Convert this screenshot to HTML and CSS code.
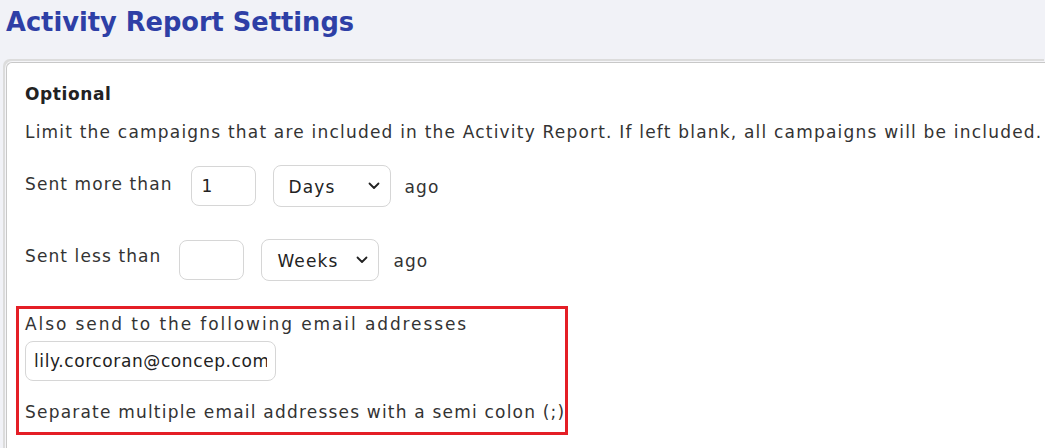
FILE: index.html
```html
<!DOCTYPE html>
<html>
<head>
<meta charset="utf-8">
<link rel="stylesheet" href="styles.css">
</head>
<body>
<h1 class="title">Activity Report Settings</h1>
<div class="panel">
  <h2 class="section-title">Optional</h2>
  <p class="intro">Limit the campaigns that are included in the Activity Report. If left blank, all campaigns will be included.</p>
  <div class="row row-more">
    <span class="label">Sent more than</span>
    <input class="num" type="text" value="1">
    <div class="select"><span>Days</span><svg width="12" height="8" viewBox="0 0 12 8"><path d="M1.5 1.5 6 6l4.5-4.5" fill="none" stroke="#222" stroke-width="1.8" stroke-linecap="round" stroke-linejoin="round"/></svg></div>
    <span class="ago">ago</span>
  </div>
  <div class="row row-less">
    <span class="label">Sent less than</span>
    <input class="num" type="text" value="">
    <div class="select"><span>Weeks</span><svg width="12" height="8" viewBox="0 0 12 8"><path d="M1.5 1.5 6 6l4.5-4.5" fill="none" stroke="#222" stroke-width="1.8" stroke-linecap="round" stroke-linejoin="round"/></svg></div>
    <span class="ago">ago</span>
  </div>
  <div class="email-group">
    <div class="email-label">Also send to the following email addresses</div>
    <input class="email" type="text" value="lily.corcoran@concep.com">
    <div class="hint">Separate multiple email addresses with a semi colon (;)</div>
  </div>
</div>
</body>
</html>
```
FILE: styles.css
```css
html, body {
  margin: 0;
  padding: 0;
  background: #f1f2f7;
  font-family: "DejaVu Sans", "Noto Sans", sans-serif;
  color: #333;
  overflow: hidden;
}
.title {
  margin: 0;
  padding: 5px 0 0 6px;
  height: 35px;
  font-size: 25.7px;
  line-height: 35px;
  font-weight: 700;
  color: #2e3fa6;
}
.panel {
  margin: 22px 0 0 6px;
  background: #fff;
  border: 1px solid #c8c8c8;
  border-right: none;
  border-radius: 6px 0 0 0;
  box-shadow: 0 0 0 1px #f5f5f8, -2px -2px 0 1px #dcdcdc;
  padding: 19px 0 0 18px;
  height: 380px;
}
.section-title {
  margin: 0;
  font-size: 17px;
  line-height: 24px;
  font-weight: 700;
  color: #222;
  letter-spacing: 0.6px;
}
.intro {
  margin: 14px 0 0;
  font-size: 17px;
  line-height: 24px;
  white-space: nowrap;
  letter-spacing: 1.2px;
}
.row {
  display: flex;
  align-items: flex-start;
  font-size: 17px;
  letter-spacing: 1.1px;
}
.row-more { margin-top: 22px; }
.row-less { margin-top: 33px; }
.label {
  line-height: 24px;
  margin-right: 18px;
}
.row-more .label { margin-top: 6px; }
.row-less .label { margin-top: 4px; }
.num {
  box-sizing: border-box;
  width: 65px;
  height: 40px;
  border: 1px solid #d6d6d6;
  border-radius: 8px;
  padding: 0 10px;
  font: inherit;
  color: #222;
  margin: 0 17px 0 0;
}
.select {
  box-sizing: border-box;
  width: 118px;
  height: 42px;
  margin-top: -1px;
  border: 1px solid #d6d6d6;
  border-radius: 8px;
  padding: 0 10px 0 15px;
  display: flex;
  align-items: center;
  justify-content: space-between;
  color: #222;
}
.select span { margin-top: 2px; }
.ago {
  margin-left: 14px;
  line-height: 24px;
  margin-top: 9px;
}
.email-group {
  box-sizing: border-box;
  width: 552px;
  margin: 25px 0 0 -9px;
  border: 3px solid #e41e26;
  padding: 3px 0 8px 6px;
  font-size: 17px;
  letter-spacing: 1.1px;
}
.email-label { line-height: 24px; letter-spacing: 1.9px; white-space: nowrap; }
.email {
  display: block;
  box-sizing: border-box;
  width: 251px;
  height: 40px;
  margin-top: 5px;
  border: 1px solid #d6d6d6;
  border-radius: 8px;
  padding: 0 8px;
  font: inherit;
  letter-spacing: 0.6px;
  color: #222;
}
.hint {
  margin-top: 19px;
  line-height: 24px;
  letter-spacing: 1.2px;
  white-space: nowrap;
}
```
